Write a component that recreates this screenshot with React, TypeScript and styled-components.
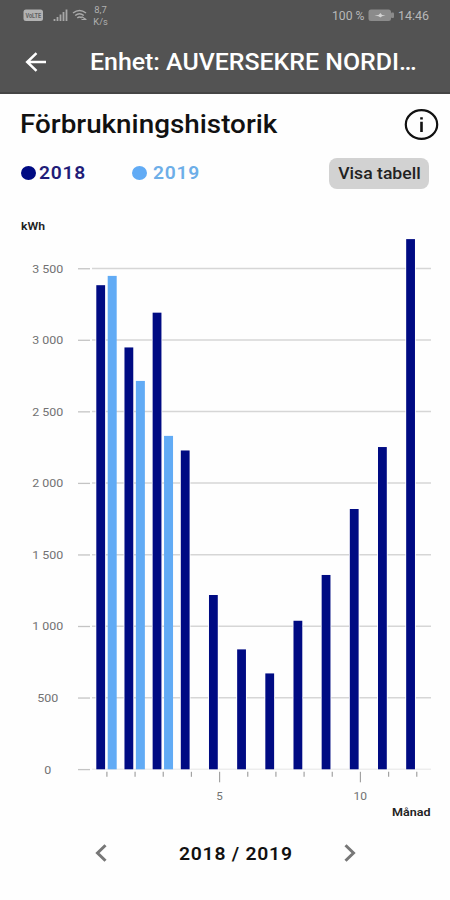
import React from "react";
import styled, { createGlobalStyle } from "styled-components";

const GlobalStyle = createGlobalStyle`
  * { box-sizing: border-box; }
  body { margin: 0; background: #fefefe; font-family: Roboto, "Noto Sans", sans-serif; }
`;

const Screen = styled.div`
  width: 450px;
  height: 900px;
  overflow: hidden;
  display: flex;
  flex-direction: column;
  background: #fefefe;
`;

const Header = styled.header`
  height: 94px;
  flex: none;
  background: #535353;
  border-bottom: 2px solid #454545;
`;

const StatusBar = styled.div`
  height: 30px;
  display: flex;
  justify-content: space-between;
  padding: 0 10px 0 23px;
`;

const TitleBar = styled.div`
  height: 64px;
  display: flex;
  align-items: center;
  padding-left: 25px;
  gap: 43px;
`;

const Label = styled.span<{
  $size: number;
  $stretch?: number;
  $weight?: number;
  $color?: string;
  $origin?: string;
  $spacing?: number;
}>`
  display: inline-block;
  white-space: nowrap;
  line-height: 1;
  font-size: ${(p) => p.$size}px;
  font-weight: ${(p) => p.$weight ?? 500};
  letter-spacing: ${(p) => p.$spacing ?? 0}px;
  color: ${(p) => p.$color ?? "inherit"};
  transform: scaleX(${(p) => p.$stretch ?? 1});
  transform-origin: ${(p) => p.$origin ?? "left"} center;
`;

const HeadingRow = styled.div`
  height: 61px;
  display: flex;
  align-items: center;
  justify-content: space-between;
  padding: 0 11px 0 20px;
`;

const LegendRow = styled.div`
  height: 36px;
  display: flex;
  align-items: center;
  padding: 0 21px;
`;

const LegendItem = styled.div<{ $color: string; $gap: number; $width: number }>`
  display: flex;
  align-items: center;
  width: ${(p) => p.$width}px;
  gap: ${(p) => p.$gap}px;
  color: ${(p) => p.$color};
`;

const Dot = styled.i`
  width: 15px;
  height: 14px;
  border-radius: 50%;
  background: currentColor;
`;

const TableButton = styled.button`
  width: 100px;
  height: 31px;
  margin-left: auto;
  padding: 1px 0 0;
  border: 0;
  border-radius: 8px;
  background: #d2d2d2;
  color: #222;
  font-family: inherit;
`;

const ChartArea = styled.svg`
  display: block;
  flex: none;
  font-family: Roboto, "Noto Sans", sans-serif;
`;

const Pager = styled.nav`
  height: 44px;
  display: flex;
  align-items: center;
  padding-left: 95px;
  margin-top: 1px;
`;

const PagerPeriod = styled.div`
  width: 237px;
  padding: 2px 0 0 72px;
  display: flex;
`;

const usage2018 = [3383, 2948, 3191, 2228, 1218, 838, 670, 1038, 1358, 1819, 2252, 3705];
const usage2019 = [3448, 2714, 2330];
const levels = [3500, 3000, 2500, 2000, 1500, 1000, 500, 0];

const BASE = 769.3;
const TOP = 191;
const yOf = (v: number) => BASE - (v * 71.55) / 500 - TOP;
const tickX = (i: number) => 106.9 + i * 28.17;
const labelFor = (v: number) => (v >= 1000 ? `${Math.floor(v / 1000)} ${String(v % 1000).padStart(3, "0")}` : String(v));

function Chart() {
  return (
    <ChartArea width="450" height="639" viewBox="0 0 450 639">
      <text x="21" y="39" fontSize="11" fontWeight="600" fill="#222" textLength="24" lengthAdjust="spacingAndGlyphs">kWh</text>
      {levels.map((v) => {
        const w = v >= 1000 ? 31 : v ? 21 : 7;
        return (
          <g key={v}>
            <path d={`M78 ${yOf(v) + 0.3}H90`} stroke="#c4c4c4" strokeWidth="1.3" />
            <path d={`M92 ${yOf(v)}H431`} stroke={v ? "#d6d6d6" : "#ededed"} strokeWidth="1.5" />
            <text x={47.8 - w / 2} y={yOf(v) + 4.2} fontSize="11.8" fill="#727272" textLength={w} lengthAdjust="spacingAndGlyphs">
              {labelFor(v)}
            </text>
          </g>
        );
      })}
      {usage2018.map((v, i) => (
        <g key={i}>
          <path d={`M${tickX(i)} ${BASE - TOP + 2.5}v${i === 4 || i === 9 ? 10.5 : 5}`} stroke="#a2a2a2" strokeWidth="1.2" />
          <rect x={tickX(i) - 11.4} y={yOf(v)} width="10.4" height={BASE - TOP - yOf(v)} fill="#fefefe" />
          <rect x={tickX(i) - 10.6} y={yOf(v)} width="8.8" height={BASE - TOP - yOf(v)} fill="#000b83" />
        </g>
      ))}
      {usage2019.map((v, i) => (
        <rect key={i} x={tickX(i) + 0.8} y={yOf(v)} width="9" height={BASE - TOP - yOf(v)} fill="#61abf5" />
      ))}
      <text x="216.2" y="609" fontSize="11.8" fill="#727272" textLength="6.5" lengthAdjust="spacingAndGlyphs">5</text>
      <text x="353.5" y="609" fontSize="11.8" fill="#727272" textLength="13.5" lengthAdjust="spacingAndGlyphs">10</text>
      <text x="392" y="625" fontSize="11" fontWeight="600" fill="#222" textLength="38.5" lengthAdjust="spacingAndGlyphs">Månad</text>
    </ChartArea>
  );
}

const StatusIcons = () => (
  <svg width="90" height="30" viewBox="23 0 90 30" fontFamily="Roboto, sans-serif">
    <rect x="23.5" y="9.5" width="19.5" height="11.5" rx="2.5" fill="#b2b2b2" />
    <text x="25.5" y="17.8" fontSize="7" fontWeight="700" fill="#626262" textLength="15.5" lengthAdjust="spacingAndGlyphs">VoLTE</text>
    <path d="M54.5 21v-2M57.5 21v-4M60.5 21v-6.5M63.5 21v-9M66.5 21v-11.5" stroke="#a8a8a8" strokeWidth="1.8" />
    <path d="M73 13q6.5-5 13 0M75.2 15.5q4.3-3.5 8.6 0M77.3 18q2.2-1.8 4.4 0" fill="none" stroke="#aaa" strokeWidth="1.5" />
    <path d="M81.5 16.5l4.5 3M81.5 19.5h5" stroke="#aaa" strokeWidth="1.2" />
    <text x="94.3" y="12.5" fontSize="9.5" fill="#b0b0b0" textLength="12.5" lengthAdjust="spacingAndGlyphs">8,7</text>
    <text x="93.3" y="24.8" fontSize="9.5" fill="#b0b0b0" textLength="14.5" lengthAdjust="spacingAndGlyphs">K/s</text>
  </svg>
);

const StatusRight = () => (
  <svg width="114" height="30" viewBox="326 0 114 30" fontFamily="Roboto, sans-serif" fill="#b8b8b8">
    <text x="332" y="20" fontSize="13.5" textLength="32.5" lengthAdjust="spacingAndGlyphs">100 %</text>
    <rect x="368.5" y="9.5" width="22.5" height="11.5" rx="2.5" fill="#8b8b8b" />
    <rect x="391" y="12.5" width="3" height="5.5" rx="1" fill="#8b8b8b" />
    <path d="M374.5 15.6l4-.6 2-2 1.5 2 3.5.3-3.5.9-1.5 1.3-2-1.3z" fill="#d2d2d2" />
    <text x="398" y="20" fontSize="13.5" textLength="31" lengthAdjust="spacingAndGlyphs">14:46</text>
  </svg>
);

const BackArrow = () => (
  <svg width="22" height="20" viewBox="0 0 22 20" fill="none" stroke="#fff" strokeWidth="2.5">
    <path d="M21 10H2.5M11.500 1.2L2.2 10l9.3 8.8" />
  </svg>
);

const InfoIcon = () => (
  <svg width="35" height="32" viewBox="0 0 35 32">
    <ellipse cx="17.5" cy="15.5" rx="15.7" ry="14.3" fill="none" stroke="#111" strokeWidth="2.2" />
    <path d="M17.5 12.7V23M17.5 8.2v2.3" stroke="#111" strokeWidth="2.6" />
  </svg>
);

const Chevron = ({ next = false }: { next?: boolean }) => (
  <svg width="12" height="18" viewBox="0 0 12 18" fill="none" stroke="#777" strokeWidth="3">
    <path d={next ? "M1.5 1.2L9.5 9l-8 7.8" : "M10.5 1.2L2.5 9l8 7.8"} />
  </svg>
);

export default function App() {
  return (
    <Screen>
      <GlobalStyle />
      <Header>
        <StatusBar>
          <StatusIcons />
          <StatusRight />
        </StatusBar>
        <TitleBar>
          <BackArrow />
          <Label $size={24} $stretch={1.037} $color="#fff">Enhet: AUVERSEKRE NORDI…</Label>
        </TitleBar>
      </Header>
      <HeadingRow>
        <Label $size={25} $stretch={1.113} $color="#111">Förbrukningshistorik</Label>
        <InfoIcon />
      </HeadingRow>
      <LegendRow>
        <LegendItem $color="#000b83" $gap={3} $width={111}>
          <Dot />
          <Label $size={18} $stretch={1.07} $spacing={0.7} $weight={600} $color="#211c78">2018</Label>
        </LegendItem>
        <LegendItem $color="#61abf5" $gap={6} $width={90}>
          <Dot />
          <Label $size={18} $stretch={1.07} $spacing={0.7} $weight={600} $color="#6daee8">2019</Label>
        </LegendItem>
        <TableButton>
          <Label $size={16} $stretch={1.1} $origin="center">Visa tabell</Label>
        </TableButton>
      </LegendRow>
      <Chart />
      <Pager>
        <Chevron />
        <PagerPeriod>
          <Label $size={18} $stretch={1.075} $spacing={0.7} $weight={600} $color="#111">2018 / 2019</Label>
        </PagerPeriod>
        <Chevron next />
      </Pager>
    </Screen>
  );
}
